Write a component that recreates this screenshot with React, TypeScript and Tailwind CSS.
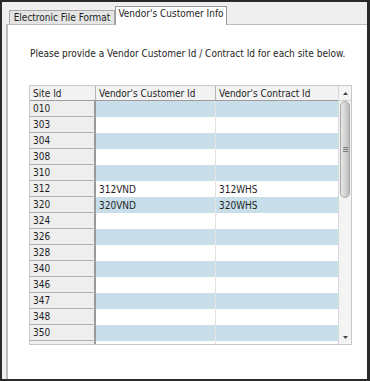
import React from "react";

const rows: [string, string, string][] = [
  ["010", "", ""],
  ["303", "", ""],
  ["304", "", ""],
  ["308", "", ""],
  ["310", "", ""],
  ["312", "312VND", "312WHS"],
  ["320", "320VND", "320WHS"],
  ["324", "", ""],
  ["326", "", ""],
  ["328", "", ""],
  ["340", "", ""],
  ["346", "", ""],
  ["347", "", ""],
  ["348", "", ""],
  ["350", "", ""],
  ["", "", ""],
];

export default function App() {
  return (
    <div
      className="w-[370px] h-[381px] bg-[#2a2a2a] pt-[2px] pl-[2px] pr-[3px] pb-[2px] text-[10px] text-[#1e1e1e]"
      style={{ fontFamily: '"DejaVu Sans Condensed", "DejaVu Sans", sans-serif' }}
    >
      <div className="w-full h-full bg-[#efefef] flex flex-col">
        {/* tabs */}
        <div className="h-[22px] flex items-end pl-[7px] shrink-0">
          <div className="h-[14px] w-[106px] bg-[#e4e4e4] border border-b-0 border-[#a8a8a8] flex items-center justify-center leading-none">
            Electronic File Format
          </div>
          <div className="h-[19px] w-[112px] bg-white border border-[#9a9a9a] border-b-0 flex items-start justify-center pt-[2px] leading-none relative top-[1px] z-10">
            Vendor's Customer Info
          </div>
        </div>
        {/* panel */}
        <div className="flex-1 ml-[4px] bg-white border-l-2 border-t border-[#bdbdbd] pl-[21px] pt-[24px]">
          <div className="leading-none pl-[1px]">
            Please provide a Vendor Customer Id / Contract Id for each site below.
          </div>
          <div className="mt-[26px] w-[323px] h-[260px] border border-[#c8c8c8] flex">
            <div className="flex flex-col w-[310px]">
              {/* header */}
              <div className="flex h-[15px] bg-[#f3f3f3] border-b border-[#9c9c9c] shrink-0">
                <div className="w-[66px] border-r border-[#b4b4b4] pl-[3px] flex items-center">Site Id</div>
                <div className="w-[120px] border-r border-[#b4b4b4] pl-[3px] flex items-center">Vendor's Customer Id</div>
                <div className="flex-1 pl-[3px] flex items-center">Vendor's Contract Id</div>
              </div>
              <div className="flex-1 overflow-hidden">
                {rows.map((r, i) => {
                  const blue = i % 2 === 0;
                  return (
                    <div key={i} className="flex h-[16px]">
                      <div className="w-[66px] bg-[#eeeeee] border-r-2 border-b border-r-[#9a9a9a] border-b-[#b0b0b0] pl-[3px] flex items-center">
                        {r[0]}
                      </div>
                      <div
                        className={
                          "w-[120px] border-r border-[#e4e4e4] pl-[3px] flex items-center " +
                          (blue ? "bg-[#c8dfea]" : "bg-white")
                        }
                      >
                        {r[1]}
                      </div>
                      <div className={"flex-1 pl-[3px] flex items-center " + (blue ? "bg-[#c8dfea]" : "bg-white")}>
                        {r[2]}
                      </div>
                    </div>
                  );
                })}
              </div>
            </div>
            {/* scrollbar */}
            <div className="w-[13px] flex flex-col bg-[#f4f4f4] border-l border-[#d8d8d8]">
              <div className="h-[15px] flex items-center justify-center border-b border-[#d0d0d0]">
                <svg width="5" height="3" viewBox="0 0 5 3">
                  <path d="M2.5 0 L5 3 L0 3 Z" fill="#444" />
                </svg>
              </div>
              <div className="flex-1 relative">
                <div className="absolute left-[1px] right-[1px] top-[0px] h-[97px] rounded-[5px] border border-[#a8a8a8] bg-gradient-to-r from-[#e8e8e8] via-[#d4d4d4] to-[#bcbcbc] flex items-center justify-center">
                  <div className="flex flex-col gap-[1px]">
                    <div className="w-[5px] h-[1px] bg-[#777]" />
                    <div className="w-[5px] h-[1px] bg-[#777]" />
                    <div className="w-[5px] h-[1px] bg-[#777]" />
                  </div>
                </div>
              </div>
              <div className="h-[14px] flex items-center justify-center">
                <svg width="5" height="3" viewBox="0 0 5 3">
                  <path d="M0 0 L5 0 L2.5 3 Z" fill="#444" />
                </svg>
              </div>
            </div>
          </div>
        </div>
      </div>
    </div>
  );
}
